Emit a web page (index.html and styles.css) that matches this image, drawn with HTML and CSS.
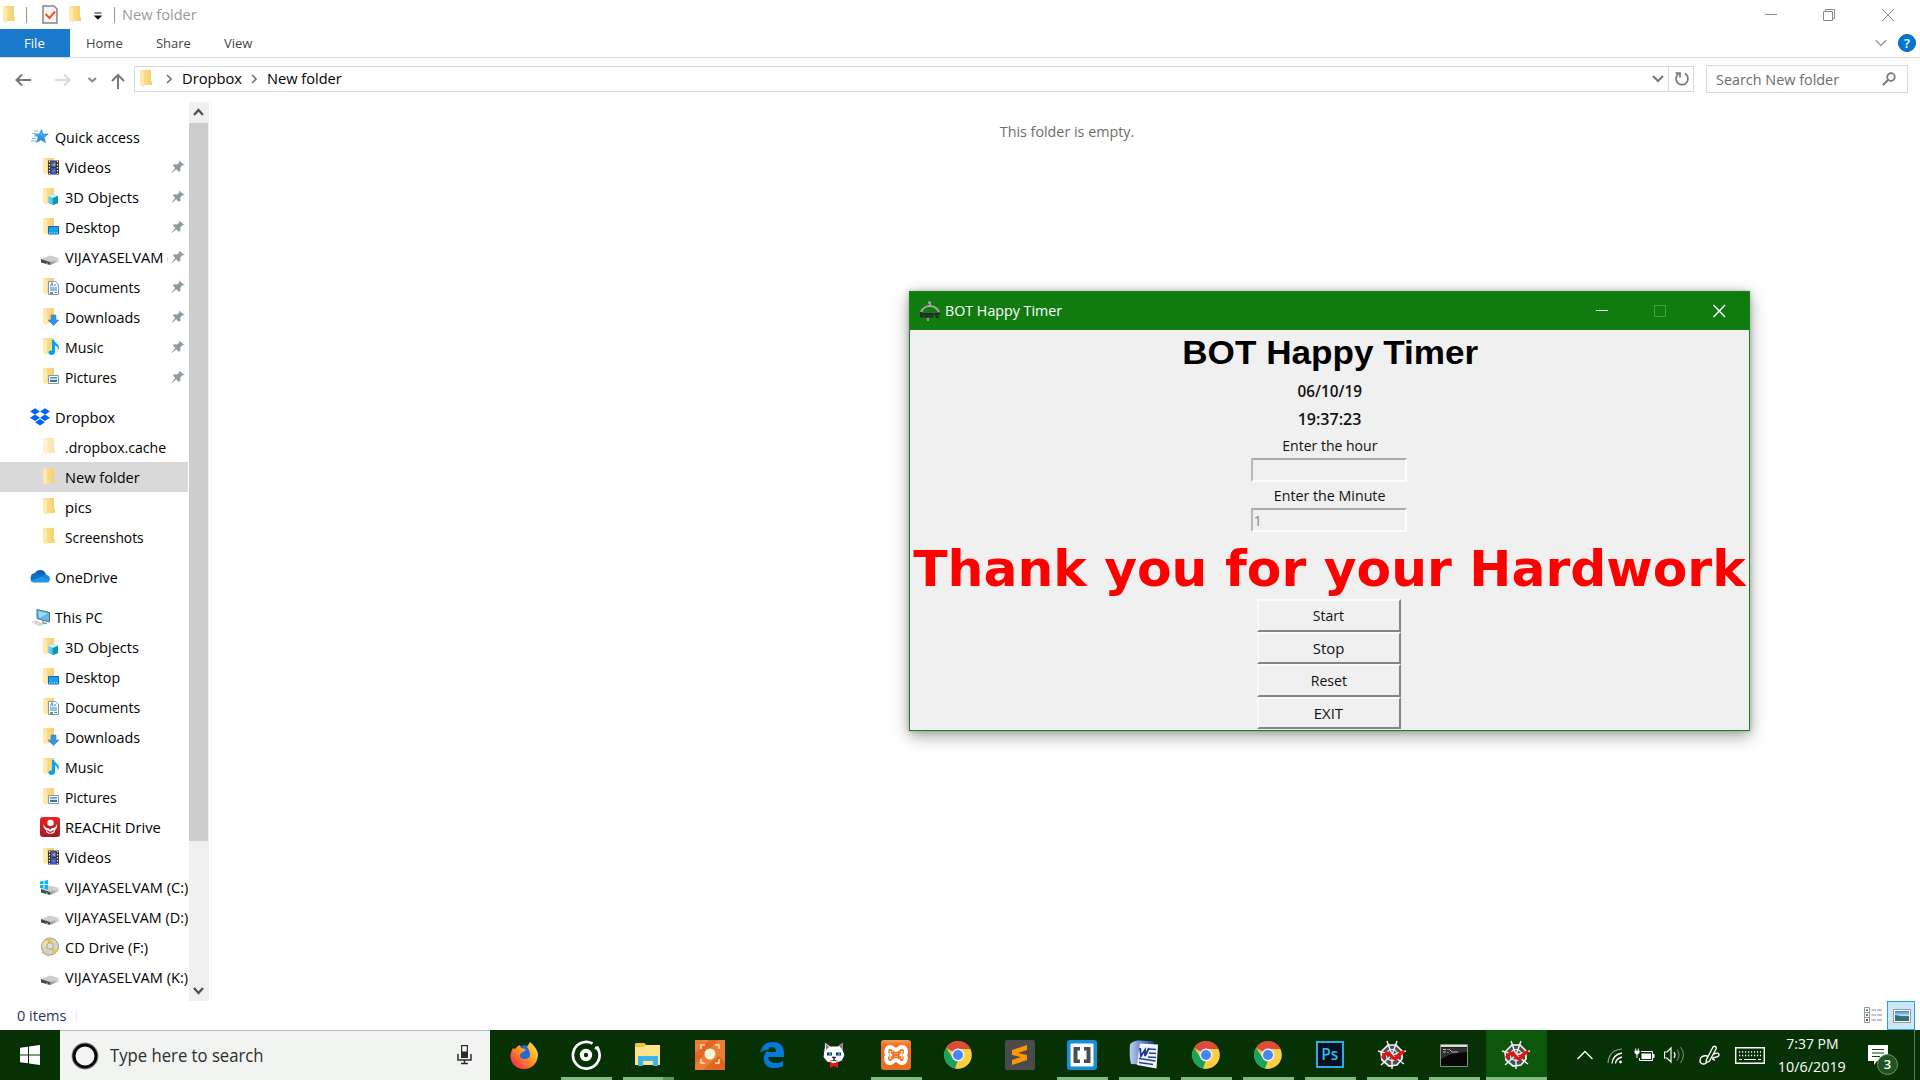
FILE: index.html
```html
<!DOCTYPE html>
<html lang="en">
<head>
<meta charset="utf-8">
<title>New folder</title>
<link rel="stylesheet" href="styles.css">
</head>
<body>
<svg class="defs" width="0" height="0">
  <defs>
    <linearGradient id="gold"><stop offset="0" stop-color="#ffe296"/><stop offset="1" stop-color="#f3ce6d"/></linearGradient>
    <linearGradient id="blueStar" x2="0" y2="1"><stop offset="0" stop-color="#4fc3ff"/><stop offset="1" stop-color="#1583d6"/></linearGradient>
    <linearGradient id="cube"><stop offset="0" stop-color="#7fdcea"/><stop offset="1" stop-color="#0d95b5"/></linearGradient>
    <linearGradient id="metal"><stop offset="0" stop-color="#8b8b8b"/><stop offset="1" stop-color="#e2e2e2"/></linearGradient>
    <linearGradient id="red" x2="0" y2="1"><stop offset="0" stop-color="#ee2222"/><stop offset="1" stop-color="#9d1d22"/></linearGradient>
    <linearGradient id="fox" x1="1" x2="0" y2="1"><stop offset="0" stop-color="#fff14a"/><stop offset=".45" stop-color="#ff9a1e"/><stop offset="1" stop-color="#f0155f"/></linearGradient>
    <linearGradient id="wordBlue" x2="1"><stop offset="0" stop-color="#b7d0f5"/><stop offset="1" stop-color="#1c3f9a"/></linearGradient>
    <linearGradient id="orange" x2="0" y2="1"><stop offset="0" stop-color="#f59a5a"/><stop offset=".2" stop-color="#ee6f1c"/><stop offset="1" stop-color="#e5701f"/></linearGradient>
    <linearGradient id="sky" x2="0" y2="1"><stop offset="0" stop-color="#2f7fe0"/><stop offset=".5" stop-color="#cfe8f5"/><stop offset=".55" stop-color="#3f7a5c"/><stop offset="1" stop-color="#2a78c4"/></linearGradient>
  </defs>
  <symbol id="folder" viewBox="0 0 20 20">
    <path d="M4 1h10v11l1 .5V16H4z" fill="url(#gold)"/><path d="M3 1l4 2v15l-4-2z" fill="#ffe9b0"/>
  </symbol>
  <symbol id="star" viewBox="0 0 20 20">
    <path d="M11.500 2.500l1.500 4.700 5.200-.2-4.200 3.400 1.500 5.200-4.400-2.900-4.500 2.600 1.600-5L4.500 7.200l5-.3z" fill="url(#blueStar)" stroke="#1779c2" stroke-width=".6"/>
    <path d="M4 4h4M2 6.500h3.500M4 9h2M2 11.500h4M1 14h5" stroke="#75bce8" stroke-width="1.200"/>
  </symbol>
  <symbol id="videos" viewBox="0 0 20 20">
    <use href="#folder"/><path d="M8 3.500h11v14H8z" fill="#33302e"/><path d="M11 4.500h5v5.500h-5z" fill="#4560c4"/><path d="M11 11h5v6h-5z" fill="#3558cf"/><path d="M12 8l3-2v3z" fill="#e8a33d"/><path d="M12 15l2-2 1 1z" fill="#e8a33d"/><path d="M9.500 4v13M17.500 4v13" stroke="#eee" stroke-width="1.300" stroke-dasharray="1.500 1.500"/>
  </symbol>
  <symbol id="objects" viewBox="0 0 20 20">
    <use href="#folder"/><path d="M8 9l5-2 5 2v7l-5 2-5-2z" fill="url(#cube)"/><path d="M8 9l5 2 5-2-5-2z" fill="#c6f3f8"/><path d="M13 11v7l5-2V9z" fill="#0897ba"/>
  </symbol>
  <symbol id="desktop" viewBox="0 0 20 20">
    <use href="#folder"/><path d="M8.500 9.500h10v7.500h-10z" fill="#1aa0ee" stroke="#0969ad"/><path d="M9 16h9" stroke="#fff" stroke-dasharray="1 1.500"/>
  </symbol>
  <symbol id="documents" viewBox="0 0 20 20">
    <use href="#folder"/><path d="M8.500 4.500h7l3 3v10h-10z" fill="#fff" stroke="#8b959d"/><path d="M10 11h7M10 13h7M14.500 15.500h2.500M14 8h2" stroke="#2683bd"/><path d="M10.500 9.500l1.500-4 1 4" fill="none" stroke="#32a0da"/><path d="M10 15h3v2h-3z" fill="#53a487"/>
  </symbol>
  <symbol id="downloads" viewBox="0 0 20 20">
    <use href="#folder"/><path d="M11 8h5v5h3l-5.500 5.500L8 13h3z" fill="#3693e3" stroke="#2c78bd" stroke-width=".5"/>
  </symbol>
  <symbol id="music" viewBox="0 0 20 20">
    <use href="#folder"/><path d="M12 3l2-.2c.3 3 5 4 5 8-.1 1-.5 2-1.200 2.800.5-3-1-4.500-2.800-5V15c0 2-1.500 3-3.500 3S8.500 17 8.500 15.500s2-2.500 3.500-1.700z" fill="#06a0f4"/>
  </symbol>
  <symbol id="pictures" viewBox="0 0 20 20">
    <use href="#folder"/><path d="M8.500 8.500h10v8h-10z" fill="#fff" stroke="#8d98a2"/><path d="M10 10h7v5h-7z" fill="url(#sky)"/>
  </symbol>
  <symbol id="drive" viewBox="0 0 20 20">
    <path d="M1 12l9-3.500 9 2.500-9 4z" fill="#cdcdcf"/><path d="M10 15l9-4v3.500L10 18z" fill="url(#metal)"/><path d="M1 12l9 3v3l-9-2.500z" fill="#494b4a"/><path d="M6 16l2 .5" stroke="#56dd73"/>
  </symbol>
  <symbol id="drivec" viewBox="0 0 20 20">
    <use href="#drive"/><path d="M0 4.500l3.500-.6v3.100H0zM4.500 3.700L8 3v4H4.500zM0 8h3.500V11.500L0 11zM4.500 8H8V12.500l-3.500-.7z" fill="#00b7f2"/>
  </symbol>
  <symbol id="cd" viewBox="0 0 20 20">
    <circle cx="10" cy="9.500" r="8.500" fill="#d7d3c4" stroke="#a09b8c"/><path d="M10 9.500L3 5a8.500 8.500 0 0 1 7-3.500l2 .3zM10 9.500l7 4.500a8.500 8.500 0 0 1-3.500 2.800z" fill="#e7c63e"/><path d="M2 10a8 8 0 0 1 5-7l3 6.500z" fill="#efe3a4"/><circle cx="10" cy="9" r="3.200" fill="#efefef" stroke="#999"/><circle cx="10" cy="9" r="1.400" fill="#fff" stroke="#aaa" stroke-width=".6"/><path d="M2 15l7 4" stroke="#bbb" stroke-width="2"/>
  </symbol>
  <symbol id="dropbox" viewBox="0 0 20 20">
    <path d="M5 1.200l5 3.200-5 3.200L0 4.400zM15 1.200l5 3.200-5 3.200-5-3.200zM5 7.600l5 3.200L5 14 0 10.800zM15 7.600l5 3.200-5 3.200-5-3.200zM10 12l5 3.200-5 3.300-5-3.300z" fill="#0062ff"/>
  </symbol>
  <symbol id="onedrive" viewBox="0 0 20 20">
    <path d="M5 6a6 6 0 0 1 11 1.500l-6 3z" fill="#0c60b6"/><path d="M4.500 15.500A4.800 4.800 0 0 1 5 6c3 0 5 2 9 5z" fill="#0d6fc9"/><path d="M12 9.500c1.500-2 4-2.500 5-1.500 4 1 4 7 0 7.500H4.500c-2 0-4-1-4-2z" fill="#2196e6"/><path d="M11 9.500c1.500-1.500 3-2.300 5-1.800l3.200 4.800z" fill="#1580dc"/>
  </symbol>
  <symbol id="pc" viewBox="0 0 20 20">
    <path d="M7 2.500l12.500 3v9.500L7 11.500z" fill="#65b8ee" stroke="#547184"/><path d="M8.500 4.200l9 2.300-8 4.500z" fill="#9bdcff"/><path d="M13 13.500v2.500l4 .5" fill="none" stroke="#88939c" stroke-width="1.500"/><path d="M1 15l5-1.500 8 4-4 1.500z" fill="#c8cdd2"/><path d="M3 15l8 2.500" stroke="#fff" stroke-dasharray="1"/>
  </symbol>
  <symbol id="reach" viewBox="0 0 20 20">
    <rect width="20" height="20" rx="3" fill="url(#red)"/><circle cx="10.500" cy="6" r="3.200" fill="#fff"/><path d="M3.500 7q1 4 5.500 4.500l1 1.500 1-1.500q5-.5 6-4.500.8 4-2 6l-.5 2.500q-4 2.500-8 0L6 13Q3 11 3.500 7z" fill="#fff"/><path d="M7 8.500q3 2 7 0M7 13.500l3 2 4-2" fill="none" stroke="#c72227" stroke-width="1.100"/>
  </symbol>
  <symbol id="pin" viewBox="0 0 14 14">
    <path d="M8 .5L13.500 5l-2 .3-2.200 2.300.1 3.400-1.700.8-2.500-2.600L1.500 12.500.5 13l.5-1 3.200-4L2 5.500l1-1.300 3.200.2L8.300 2.500z" fill="#8f9ba3"/>
  </symbol>
  <symbol id="chrome" viewBox="0 0 28 28">
    <circle cx="14" cy="14" r="13.800" fill="#ffcd40"/><path d="M14 14L2.200 6.700A13.800 13.800 0 0 1 26.500 8H14z" fill="#dc4b3e"/><path d="M2.200 6.700L8.800 17l5.200 3-2.800 7.600A13.800 13.800 0 0 1 2.200 6.700z" fill="#1aa260"/><path d="M14 20l-2.800 7.600 3.800.2 5-10.800z" fill="#ffcd40"/><circle cx="14" cy="14" r="6.500" fill="#f1f1f1"/><circle cx="14" cy="14" r="5" fill="#4587f4"/>
  </symbol>
  <symbol id="spyder" viewBox="0 0 30 30">
    <path d="M11 5l8 0 6 6 0 8-5 6-8 1-7-6-1-8z" fill="#4b4d51" stroke="#f5f5f5" stroke-width="1.700"/>
    <path d="M15 15L10 1M15 15L20 1M15 15L29 11M15 15L27 24M15 15v14M15 15L4 25M15 15L1 11" stroke="#f2f2f2" stroke-width="1.500"/>
    <path d="M12.500 9.500h5l3.500 4-1 5-5 2.500-5-2.500-1-5z" fill="none" stroke="#e6e6e6" stroke-width="1.200"/>
    <path d="M6 17C8 13 12 12 14 15.500S19 20 21 16q1.500-3 5-3.500" fill="none" stroke="#f20d0d" stroke-width="3.300" stroke-linecap="round"/>
  </symbol>
</svg>

<div class="explorer">
  <header class="titlebar">
    <svg class="ico" viewBox="0 0 20 20"><use href="#folder"/></svg>
    <i class="rule"></i>
    <svg class="props" width="16" height="20" viewBox="0 0 16 20"><path d="M1 1h11l3 3v14H1z" fill="#f6f6f6" stroke="#858585" stroke-width="1.500"/><path d="M3.500 9l4 4L13 6.500" fill="none" stroke="#f0541e" stroke-width="2"/></svg>
    <svg class="ico" viewBox="0 0 20 20"><use href="#folder"/></svg>
    <svg class="drop" width="8" height="8" viewBox="0 0 8 8"><path d="M.5 1h7M1 4h6L4 7z" stroke="#111" fill="#111" stroke-width="1.200"/></svg>
    <i class="rule"></i>
    <span class="t" data-w="73">New folder</span>
    <svg class="winbtns" width="130" height="14" viewBox="0 0 130 14" fill="none" stroke="#8a8a8a"><path d="M0 6.500h12M58.500 3.500h9v9h-9zM60.500 3V1.500h9v9H68M117 1l12 12M129 1l-12 12"/></svg>
  </header>
  <nav class="tabs">
    <span class="tab file"><span class="t" data-w="19">File</span></span>
    <span class="tab home"><span class="t" data-w="35">Home</span></span>
    <span class="tab share"><span class="t" data-w="33">Share</span></span>
    <span class="tab view"><span class="t" data-w="27">View</span></span>
    <svg class="fold" width="12" height="8" viewBox="0 0 12 8"><path d="M.5 1L6 6.500 11.500 1" fill="none" stroke="#999" stroke-width="1.300"/></svg>
    <span class="help">?</span>
  </nav>
  <div class="address">
    <svg class="arrows" width="110" height="20" viewBox="0 0 110 20" fill="none" stroke-width="2">
      <path d="M16 10h15M22 4.500L16.500 10l5.500 5.500" stroke="#777"/><path d="M55 10h14M64 4.500L69.500 10 64 15.500" stroke="#dadada"/><path d="M88.500 8l3.800 3.500L96 8" stroke="#888"/>
    </svg>
    <svg class="up" width="14" height="16" viewBox="0 0 14 16"><path d="M7 16V2M1 8l6-6 6 6" fill="none" stroke="#777" stroke-width="2"/></svg>
    <div class="path">
      <svg class="ico" viewBox="0 0 20 20"><use href="#folder"/></svg>
      <svg class="gt" width="6" height="10" viewBox="0 0 6 10"><path d="M1 1l4 4-4 4" fill="none" stroke="#777" stroke-width="1.600"/></svg>
      <span class="t crumb1" data-w="58.5">Dropbox</span>
      <svg class="gt" width="6" height="10" viewBox="0 0 6 10"><path d="M1 1l4 4-4 4" fill="none" stroke="#777" stroke-width="1.600"/></svg>
      <span class="t" data-w="73">New folder</span>
      <svg class="pathdrop" width="12" height="8" viewBox="0 0 12 8"><path d="M1 1l5 5 5-5" fill="none" stroke="#777" stroke-width="2"/></svg>
      <span class="refresh"><svg width="16" height="16" viewBox="0 0 16 16"><path d="M11 2.500A6 6 0 1 1 4.500 2.800M1.500 2H6v4.500" fill="none" stroke="#777" stroke-width="1.700"/></svg></span>
    </div>
    <div class="search">
      <span class="t" data-w="122">Search New folder</span>
      <svg width="14" height="14" viewBox="0 0 14 14"><circle cx="9" cy="5" r="3.800" fill="none" stroke="#777" stroke-width="1.700"/><path d="M6 8L1 13" stroke="#777" stroke-width="2"/></svg>
    </div>
  </div>
  <div class="body">
    <aside class="tree">
      <div class="group">
        <div class="row top"><svg class="ico"><use href="#star"/></svg><span class="t" data-w="83">Quick access</span></div>
        <div class="row"><svg class="ico"><use href="#videos"/></svg><span class="t" data-w="45">Videos</span><svg class="pin"><use href="#pin"/></svg></div>
        <div class="row"><svg class="ico"><use href="#objects"/></svg><span class="t" data-w="73">3D Objects</span><svg class="pin"><use href="#pin"/></svg></div>
        <div class="row"><svg class="ico"><use href="#desktop"/></svg><span class="t" data-w="54">Desktop</span><svg class="pin"><use href="#pin"/></svg></div>
        <div class="row"><svg class="ico"><use href="#drive"/></svg><span class="clip"><span class="t" data-w="122">VIJAYASELVAM (K:)</span></span><svg class="pin"><use href="#pin"/></svg></div>
        <div class="row"><svg class="ico"><use href="#documents"/></svg><span class="t" data-w="74">Documents</span><svg class="pin"><use href="#pin"/></svg></div>
        <div class="row"><svg class="ico"><use href="#downloads"/></svg><span class="t" data-w="74">Downloads</span><svg class="pin"><use href="#pin"/></svg></div>
        <div class="row"><svg class="ico"><use href="#music"/></svg><span class="t" data-w="37">Music</span><svg class="pin"><use href="#pin"/></svg></div>
        <div class="row"><svg class="ico"><use href="#pictures"/></svg><span class="t" data-w="50">Pictures</span><svg class="pin"><use href="#pin"/></svg></div>
      </div>
      <div class="group">
        <div class="row top"><svg class="ico"><use href="#dropbox"/></svg><span class="t" data-w="58.5">Dropbox</span></div>
        <div class="row"><svg class="ico faded"><use href="#folder"/></svg><span class="t" data-w="100">.dropbox.cache</span></div>
        <div class="row selected"><svg class="ico"><use href="#folder"/></svg><span class="t" data-w="73">New folder</span></div>
        <div class="row"><svg class="ico"><use href="#folder"/></svg><span class="t" data-w="25.5">pics</span></div>
        <div class="row"><svg class="ico"><use href="#folder"/></svg><span class="t" data-w="77.5">Screenshots</span></div>
      </div>
      <div class="group">
        <div class="row top"><svg class="ico"><use href="#onedrive"/></svg><span class="t" data-w="61.5">OneDrive</span></div>
      </div>
      <div class="group">
        <div class="row top"><svg class="ico"><use href="#pc"/></svg><span class="t" data-w="46.5">This PC</span></div>
        <div class="row"><svg class="ico"><use href="#objects"/></svg><span class="t" data-w="73">3D Objects</span></div>
        <div class="row"><svg class="ico"><use href="#desktop"/></svg><span class="t" data-w="54">Desktop</span></div>
        <div class="row"><svg class="ico"><use href="#documents"/></svg><span class="t" data-w="74">Documents</span></div>
        <div class="row"><svg class="ico"><use href="#downloads"/></svg><span class="t" data-w="74">Downloads</span></div>
        <div class="row"><svg class="ico"><use href="#music"/></svg><span class="t" data-w="37">Music</span></div>
        <div class="row"><svg class="ico"><use href="#pictures"/></svg><span class="t" data-w="50">Pictures</span></div>
        <div class="row"><svg class="ico"><use href="#reach"/></svg><span class="t" data-w="94">REACHit Drive</span></div>
        <div class="row"><svg class="ico"><use href="#videos"/></svg><span class="t" data-w="45">Videos</span></div>
        <div class="row"><svg class="ico"><use href="#drivec"/></svg><span class="t" data-w="121.5">VIJAYASELVAM (C:)</span></div>
        <div class="row"><svg class="ico"><use href="#drive"/></svg><span class="t" data-w="122">VIJAYASELVAM (D:)</span></div>
        <div class="row"><svg class="ico"><use href="#cd"/></svg><span class="t" data-w="82">CD Drive (F:)</span></div>
        <div class="row"><svg class="ico"><use href="#drive"/></svg><span class="t" data-w="121.5">VIJAYASELVAM (K:)</span></div>
      </div>
    </aside>
    <div class="scroll">
      <svg width="20" height="21" viewBox="0 0 20 21"><path d="M5 13l4.500-5 4.500 5" fill="none" stroke="#505050" stroke-width="2.200"/></svg>
      <div class="thumb"></div>
      <svg width="20" height="21" viewBox="0 0 20 21"><path d="M5 8l4.500 5L14 8" fill="none" stroke="#505050" stroke-width="2.200"/></svg>
    </div>
    <main class="content"><span class="t mid" data-w="133">This folder is empty.</span></main>
  </div>
  <footer class="status">
    <span class="t" data-w="48">0 items</span><i class="sep"></i>
    <svg class="details" width="18" height="17" viewBox="0 0 18 17"><path d="M.5.500h5v5h-5zM.5 5.500h5v5h-5zM.5 10.500h5v5h-5z" fill="#fff" stroke="#999"/><path d="M7.500 3h4.500M13 3h5M7.500 8h4.500M13 8h5M7.500 13h4.500M13 13h5" stroke="#888"/><path d="M2 2.500h2v1.500H2z" fill="#2b8a78"/><path d="M2 7h2v2H2z" fill="#777b50"/><path d="M2 12h2v2H2z" fill="#d03020"/></svg>
    <span class="large"><svg width="18" height="14" viewBox="0 0 18 14"><path d="M.5.500h17v13H.5z" fill="#fff" stroke="#999"/><path d="M2 2h14v10H2z" fill="url(#sky)"/><path d="M2 6q5 0 9 3.500h5V12H2z" fill="#2e6f74"/></svg></span>
  </footer>
</div>

<section class="timer">
  <div class="timer-title">
    <svg width="21" height="21" viewBox="0 0 21 21"><path d="M1 11q3-6 9-6t9 6" fill="none" stroke="#a5a5a5" stroke-width="2"/><path d="M10 1v4M8 1.500h3M8 17v3" stroke="#a5a5a5" stroke-width="1.800"/><path d="M1 11v4.500h5V13H1M7.500 13h5v2.500h-5zM14 13h6M16.500 12v4H19" fill="none" stroke="#26262b" stroke-width="1.800"/></svg>
    <span class="t" data-w="116">BOT Happy Timer</span>
    <svg class="tbtns" width="130" height="14" viewBox="0 0 130 14" fill="none" stroke="#fff"><path d="M0 6.500h12"/><path d="M58.500 1.500h11v11h-11z" stroke="#47a047"/><path d="M117.500 1l11.500 12M129 1L117.500 13" stroke-width="1.400"/></svg>
  </div>
  <div class="timer-body">
    <div class="l1"><span class="t mid" data-w="295">BOT Happy Timer</span></div>
    <div class="l2"><span class="t mid" data-w="62.5">06/10/19</span></div>
    <div class="l2"><span class="t mid" data-w="62.5">19:37:23</span></div>
    <div class="l3"><span class="t mid" data-w="94">Enter the hour</span></div>
    <div class="field"></div>
    <div class="l3"><span class="t mid" data-w="110">Enter the Minute</span></div>
    <div class="field">1</div>
    <div class="thanks"><span class="t mid" data-w="831">Thank you for your Hardwork</span></div>
    <div class="btn"><span class="t mid" data-w="30">Start</span></div>
    <div class="btn"><span class="t mid" data-w="30">Stop</span></div>
    <div class="btn"><span class="t mid" data-w="35">Reset</span></div>
    <div class="btn"><span class="t mid" data-w="28">EXIT</span></div>
  </div>
</section>

<div class="taskbar">
  <div class="start"><svg width="20" height="20" viewBox="0 0 20 20"><path d="M0 2.800l8-1.100v7.800H0zM9 1.500L20 0v9.500H9zM0 10.500h8v7.800l-8-1.100zM9 10.500h11V20L9 18.500z" fill="#fff"/></svg></div>
  <div class="cortana">
    <svg width="28" height="28" viewBox="0 0 28 28"><circle cx="14" cy="14" r="12.500" fill="none" stroke="#8b8d8b" stroke-width="2"/><circle cx="14" cy="14" r="11" fill="none" stroke="#060606" stroke-width="3"/></svg>
    <span class="t" data-w="152">Type here to search</span>
    <svg class="mic" width="15" height="20" viewBox="0 0 15 20"><path d="M4 0h7v13H4z" fill="#2c2c2c"/><path d="M5.200 1.200h4.600v5.300H5.200z" fill="#f4f4f4"/><path d="M1 9v6h13V9M7.500 15v4M4 18.500h7" fill="none" stroke="#2c2c2c" stroke-width="1.500"/></svg>
  </div>
  <div class="apps">
    <div class="app"><svg width="28" height="28" viewBox="0 0 28 28"><circle cx="15" cy="13" r="9" fill="#2168dc"/><path d="M3 7l2 1q2-3 5-4l1 3q3 0 5 2l-3 2q-3 1-3 4t5 3q4 0 5-3 0-6-3-9l3-5q7 6 8 12c0 9-6 15-14 15S0 22 .5 14Q1 10 3 7z" fill="url(#fox)"/></svg></div>
    <div class="app open"><svg width="30" height="30" viewBox="0 0 30 30" fill="none" stroke="#fff"><path d="M21.500 3.500A13.300 13.300 0 1 0 27 9l-3-1.500" stroke-width="2.700"/><path d="M27 9.500l-1-3" stroke-width="3"/><circle cx="15" cy="15" r="4.200" stroke-width="4"/></svg></div>
    <div class="app open multi"><svg width="30" height="26" viewBox="0 0 30 26"><path d="M2 3q0-2 2-2h7l2 2h14v20H2z" fill="#ffe48b"/><path d="M2 3q0-2 2-2h7l2 2-2 2H2z" fill="#f5c33b"/><path d="M5 24V14h20v10h-5v-5h-10v5z" fill="#3ab4ea"/></svg></div>
    <div class="app"><svg width="30" height="30" viewBox="0 0 30 30"><path d="M0 0h30v30H0z" fill="#ee7d31"/><path d="M0 14L14 0h9L0 24zM8 30L24 16l6 6v8z" fill="#e05f20" opacity=".8"/><circle cx="15" cy="14" r="5.500" fill="#f3f8da"/><path d="M6 9V5h4M20 5h4v4M6 19v4h4M20 23h4v-4" fill="none" stroke="#f7dfc2" stroke-width="1.500"/></svg></div>
    <div class="app"><svg width="26" height="28" viewBox="0 0 26 28"><path d="M1 12Q3 1 14 1c9 0 11 6 11 12v3H9q1 6 8 6 4 0 7-2v5q-3 2-9 2C6 27 4 20 5 15q1-4 5-6Q5 8 1 12zm8-1h8q0-5-4-5t-4 5z" fill="#0878d7" fill-rule="evenodd"/></svg></div>
    <div class="app"><svg width="26" height="26" viewBox="0 0 26 26"><path d="M3 8L4 0l5 4h8l5-4v8l2 5-3 6-8 3-7-2-4-5z" fill="#fff" stroke="#222"/><path d="M5 2v6l3-3zM21 2v5l-3-3z" fill="#777"/><path d="M6 12h5M15 12h5" stroke="#0b3650" stroke-width="3"/><path d="M8 12h2M17 12h2" stroke="#49c0e0" stroke-width="1.500"/><path d="M11 15h4l-2 2zM9 19q4 0 4-2 0 2 4 2" fill="#222" stroke="#222" stroke-width=".6"/><path d="M9 20l4 1.500 4-1.500v6l-4-2-4 2z" fill="#f31515"/></svg></div>
    <div class="app open"><svg width="30" height="30" viewBox="0 0 30 30"><rect width="30" height="30" rx="3" fill="url(#orange)"/><path d="M9 7c3 0 4 3 6 3s3-3 6-3c4 0 5 5 3 8 2 4 0 8-3 8-3 0-4-3-6-3s-3 3-6 3c-4 0-5-5-3-8-2-4 0-8 3-8z" fill="none" stroke="#fff" stroke-width="4"/><path d="M10 11v8M20 11v8M11 15h8" stroke="#fff" stroke-width="3"/><path d="M10 11.500q2 3.500 5 3.500t5-3.500M10 18.500Q12 15 15 15t5 3.500" fill="none" stroke="#ec7628" stroke-width="2"/></svg></div>
    <div class="app"><svg width="28" height="28"><use href="#chrome"/></svg></div>
    <div class="app"><svg width="30" height="30" viewBox="0 0 30 30"><rect width="30" height="30" rx="2" fill="#4b4b4b"/><path d="M7 10l15-5v5l-9 3 9 2v5L7 25v-5l9-3-9-2z" fill="#ff9800"/></svg></div>
    <div class="app open"><svg width="30" height="30" viewBox="0 0 30 30"><rect width="30" height="30" rx="3" fill="#158dd9"/><rect x="3.500" y="3.500" width="23" height="23" rx="1" fill="#fff"/><path d="M13 7H6.500v16H13v-3.500h-2.500v-9H13zM17 7h6.500v16H17v-3.500h2.500v-9H17z" fill="#4b4f51"/></svg></div>
    <div class="app open"><svg width="30" height="30" viewBox="0 0 30 30"><path d="M1 4q4-4 10-3.500l14 1L22 25l-20-1Q0 16 1 4z" fill="url(#wordBlue)"/><path d="M11 3.500l18 1-1.500 24L8 25z" fill="#f2f5fc"/><path d="M20 9l7 .5M20 13l7 .5M19 17l8 .5M10 18.500l16.500 2.500M10 22.500l14 2" stroke="#234495" stroke-width="1.600"/><path d="M11 8l1 8 4-6v6l4-8" fill="none" stroke="#1a3585" stroke-width="1.800"/></svg></div>
    <div class="app open"><svg width="28" height="28"><use href="#chrome"/></svg></div>
    <div class="app open"><svg width="28" height="28"><use href="#chrome"/></svg></div>
    <div class="app open"><span class="ps"><span class="t mid" data-w="16">Ps</span></span></div>
    <div class="app open"><svg width="30" height="30"><use href="#spyder"/></svg></div>
    <div class="app open"><svg width="28" height="23" viewBox="0 0 28 23"><path d="M.5.500h27v22H.5z" fill="#060606" stroke="#8a8a8a"/><path d="M1 3.500h26V8Q10 9 1 15z" fill="#303030"/><path d="M1 2h26" stroke="#ddd" stroke-width="2"/><path d="M3 5.500h3M3 8h3M8 5v1M8 8v1M9 5l3 3h6" fill="none" stroke="#bdbdbd"/></svg></div>
    <div class="app open active"><svg width="30" height="30"><use href="#spyder"/></svg></div>
  </div>
  <div class="tray">
    <svg class="chev" width="16" height="10" viewBox="0 0 16 10"><path d="M.5 9L8 1.500 15.500 9" fill="none" stroke="#fff" stroke-width="1.300"/></svg>
    <svg class="wifi" width="16" height="16" viewBox="0 0 16 16" fill="none" stroke="#fff"><path d="M5 15.500Q6 6.500 15 5M8.500 15.500q.5-5 6.500-6.500" stroke-width="1.300"/><path d="M1 15Q2 2 15 1" stroke="#86a385" stroke-width="1.200"/><circle cx="13.500" cy="14" r="1" fill="#fff"/></svg>
    <svg class="batt" width="21" height="15" viewBox="0 0 21 15"><path d="M7 3.500h11.500v9h-13V10" fill="none" stroke="#fff"/><path d="M7.500 5.500h9.500v5.500H7.500zM19 6h1.500v4H19z" fill="#fff"/><path d="M1.700 .5v2M4.300 .5v2M3 6v4" stroke="#fff"/><path d="M.5 2.500h5v2.300L4 6.500H2L.5 4.800z" fill="#fff"/></svg>
    <svg class="vol" width="21" height="18" viewBox="0 0 21 18" fill="none"><path d="M.5 6H3l4-4v14l-4-4H.5z" stroke="#fff" stroke-width="1.200"/><path d="M10 6q2 3 0 6" stroke="#fff" stroke-width="1.200"/><path d="M13 3.500q4 5.500 0 11M16.500 1q6 8 0 16" stroke="#658463" stroke-width="1.200"/></svg>
    <svg class="pen" width="21" height="21" viewBox="0 0 21 21" fill="none" stroke="#fff" stroke-width="1.400"><path d="M7.500 14.500L14 2q1.500-1.500 3 0 .5 1 0 2L10.500 16 7 18zM8.500 11C4 10 1 12 1 15.500S5 20 7 18M15 9c3-1.500 5-1 5 1s-3 2-5 2.500-2 2.500 1 2.500"/></svg>
    <svg class="kbd" width="30" height="17" viewBox="0 0 30 17" fill="none" stroke="#fff"><path d="M.7.700h28.600v15.600H.7z" stroke-width="1.400"/><path d="M4 5h22M4 8.500h22" stroke-width="1.300" stroke-dasharray="1.200 1.800"/><path d="M4 12.500h3M9 12.500h12M23 12.500h3" stroke-width="1.200"/></svg>
    <div class="clock"><span class="t mid" data-w="51">7:37 PM</span><span class="t mid" data-w="67">10/6/2019</span></div>
    <div class="notes"><svg width="20" height="20" viewBox="0 0 20 20"><path d="M0 0h20v16H9l-3 4v-4H0z" fill="#fff"/><path d="M4 4.500h12M4 8h12M4 11.500h8" stroke="#17401a" stroke-width="1.200"/></svg><span class="badge">3</span></div>
    <i class="peek"></i>
  </div>
</div>
<script src="fit.js"></script>
</body>
</html>
```
FILE: styles.css
```css
* { box-sizing: border-box; }
body {
  margin: 0;
  width: 1920px;
  height: 1080px;
  overflow: hidden;
  background: #fff;
  color: #000;
  font: 14.700px/20px "Open Sans", "Noto Sans", sans-serif;
}
svg { display: block; flex: none; }
i { display: block; flex: none; }
.defs { position: absolute; }
.t { display: inline-block; white-space: nowrap; transform-origin: 0 50%; flex: none; }
.t.mid { transform-origin: 50% 50%; }
.ico { width: 20px; height: 20px; }

.explorer { display: flex; flex-direction: column; height: 1030px; }
.titlebar { display: flex; align-items: center; height: 29px; padding-bottom: 2px; color: #999; }
.titlebar .rule { width: 1px; height: 16px; background: #999; margin: 2px 0 0 6px; }
.titlebar .props { margin: 3px 8px 0 15px; }
.titlebar .drop { margin: 4px 6px 0 8px; }
.titlebar .drop + .rule { margin: 2px 7px 0 6px; }
.titlebar .ico { margin-top: 3px; }
.winbtns { margin: 2px 25px 0 auto; }

.tabs { display: flex; align-items: center; height: 29px; border-bottom: 1px solid #d9dadb; font-size: 12.800px; color: #444; }
.tab { display: block; }
.tab.file { width: 70px; height: 28px; line-height: 28px; background: #1979ca; color: #fff; padding-left: 24px; }
.tab.home { width: 70px; padding-left: 16px; }
.tab.share { width: 68px; padding-left: 16px; }
.tab.view { padding-left: 16px; }
.fold { margin-left: auto; margin-right: 11px; }
.help { width: 18px; height: 18px; margin-right: 4px; border-radius: 50%; background: #0078d7; border: 1px solid #0c5da8; color: #fff; font-weight: 600; font-size: 13px; line-height: 16px; text-align: center; }

.address { display: flex; align-items: center; height: 44px; padding-bottom: 2px; }
.arrows { margin-top: 2px; }
.up { margin: 3px 9px 0 1px; }
.path { display: flex; align-items: center; width: 1560px; height: 26px; border: 1px solid #d9d9d9; }
.path .ico { margin-left: 2px; }
.path .t { margin-top: -2px; }
.path .gt { margin: 0 10px 0 9px; }
.path .ico + .gt { margin-left: 9px; }
.path .crumb1 + .gt { margin-left: 9px; margin-right: 10px; }
.pathdrop { margin-left: auto; margin-right: 4px; }
.refresh { display: flex; align-items: center; justify-content: center; width: 25px; height: 24px; padding-left: 1px; border-left: 1px solid #d9d9d9; }
.search { display: flex; align-items: center; justify-content: space-between; width: 202px; height: 28px; margin-left: 12px; padding: 0 11px 0 9px; border: 1px solid #d9d9d9; color: #6d6d6d; }

.body { display: flex; height: 899px; }
.tree { width: 189px; padding-top: 20px; overflow: hidden; }
.group { margin-bottom: 10px; }
.row { display: flex; align-items: center; gap: 5px; width: 188px; height: 30px; padding-left: 40px; overflow: hidden; }
.row.top { padding-left: 30px; }
.row.selected { background: #d9d9d9; }
.faded { opacity: .55; }
.clip { flex: none; width: 103px; overflow: hidden; height: 20px; }
.pin { width: 14px; height: 14px; margin-left: auto; margin-right: 3px; }
.row .clip + .pin { margin-left: -2px; }
.scroll { width: 20px; background: #f0f0f0; display: flex; flex-direction: column; }
.thumb { width: 19px; height: 718px; background: #cdcdcd; margin-bottom: auto; }
.content { flex: 1; margin-left: 2px; border-left: 1px solid #f5f5f5; padding: 19px 0 0 2px; text-align: center; color: #6d6d6d; }
.status { display: flex; align-items: center; height: 29px; padding-left: 17px; color: #1e395b; }
.status .t { margin-top: -2px; }
.sep { width: 1px; height: 12px; background: #ececec; margin-left: 9px; }
.details { margin-left: auto; margin-right: 5px; }
.large { display: flex; align-items: center; justify-content: center; width: 28px; height: 29px; margin-right: 5px; background: #cce8f7; border: 1px solid #26a0da; padding-left: 2px; }

.timer { position: absolute; left: 909px; top: 291px; width: 841px; height: 440px; border: 1px solid #178017; background: #f0f0f0; box-shadow: 0 5px 16px rgba(0, 0, 0, .36), 0 0 5px rgba(0, 0, 0, .22); }
.timer-title { display: flex; align-items: center; gap: 4px; height: 38px; padding: 0 23px 0 10px; background: #107c10; color: #fff; }
.timer-title .t { margin-top: -2px; }
.tbtns { margin-left: auto; }
.timer-body { display: flex; flex-direction: column; align-items: center; }
.l1 { height: 47px; font: bold 34px/45px "Liberation Sans", Arial, sans-serif; padding-left: 1px; }
.l2 { height: 27.500px; line-height: 29px; font-size: 16px; font-weight: 600; color: #111; }
.l3 { height: 26px; line-height: 27px; font-size: 14.700px; color: #111; }
.field { width: 156px; height: 24px; margin-right: 2px; padding-left: 1px; line-height: 20px; color: #85858c; border: 2px solid; border-color: #aaa #fcfcfc #fcfcfc #b9b9b9; }
.thanks { height: 67px; font: bold 50px/74px "DejaVu Sans", Verdana, sans-serif; color: #f00; }
.btn { width: 144px; height: 32.500px; margin-right: 2px; line-height: 29px; text-align: center; border: 2px solid; border-color: #fafafa #848484 #848484 #fafafa; color: #111; }

.taskbar { display: flex; height: 50px; background: #053105; color: #fff; }
.start { width: 60px; display: flex; align-items: center; justify-content: center; }
.cortana { width: 430px; display: flex; align-items: center; background: #f2f4f2; border-top: 1px solid #b5beb5; color: #2d2d2d; padding: 0 18px 0 11px; font-size: 17.500px; }
.cortana .t { margin: -2px 0 0 11px; }
.mic { margin: -2px 0 0 auto; }
.apps { display: flex; margin-left: 3px; }
.app { width: 62px; height: 50px; display: flex; align-items: center; justify-content: center; }
.app.open { background: linear-gradient(#81b981, #81b981) 6px 47px / 51px 3px no-repeat; }
.app.multi { background: linear-gradient(90deg, #81b981 40px, #5d9460 40px) 6px 47px / 51px 3px no-repeat; }
.app.active { width: 61px; margin-left: 1px; padding-right: 2px; background: linear-gradient(#81b981, #81b981) 0 47px / 61px 3px no-repeat, #0c570c; }
.ps { width: 28px; height: 27px; margin-top: -2px; border: 2px solid #2fa9e0; background: #061020; color: #35b8f0; font-weight: 600; font-size: 16px; line-height: 23px; text-align: center; }
.tray { display: flex; align-items: center; flex: 1; padding-left: 30px; }
.wifi { margin-left: 14px; margin-top: 2px; }
.batt { margin-left: 11px; }
.vol { margin-left: 9px; }
.pen { margin-left: 14px; }
.kbd { margin-left: 15px; }
.clock { width: 94px; display: flex; flex-direction: column; align-items: center; font-size: 14.700px; line-height: 23px; padding-bottom: 1px; }
.notes { position: relative; margin-left: 9px; }
.badge { position: absolute; left: 9px; top: 9px; width: 21px; height: 21px; border-radius: 50%; border: 1px solid #6c956b; background: #1d5420; font-size: 13px; font-weight: 600; line-height: 19px; text-align: center; }
.peek { width: 1px; height: 50px; background: #5c7a5c; margin-left: auto; margin-right: 5px; }
```
FILE: fit.js
```javascript
// Condense each label to the advance width given in data-w (plus side bearings).
document.querySelectorAll('[data-w]').forEach(function (el) {
  var want = Number(el.dataset.w) + 1.5;
  var have = el.offsetWidth;
  el.style.transform = 'scaleX(' + (want / have) + ')';
  // Left-aligned labels also give back the space they no longer use.
  if (!el.classList.contains('mid')) el.style.marginRight = (want - have) + 'px';
});
```
